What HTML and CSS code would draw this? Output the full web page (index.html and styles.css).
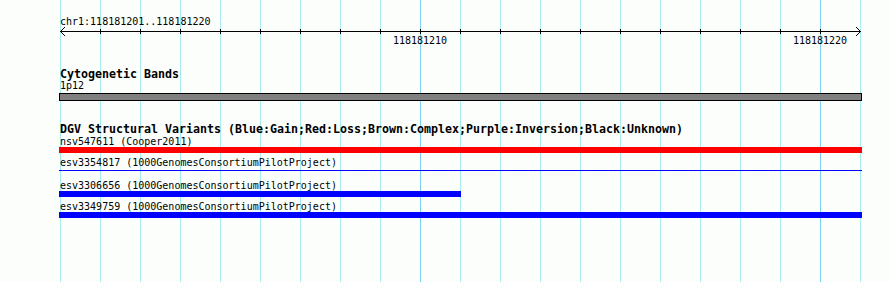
FILE: index.html
```html
<!DOCTYPE html>
<html>
<head>
<meta charset="utf-8">
<title>Genome browser</title>
<link rel="stylesheet" href="styles.css">
</head>
<body>
<div class="browser">
  <div class="grid" aria-hidden="true">
    <span class="gl" style="left:60px"></span>
    <span class="gl" style="left:100px"></span>
    <span class="gl" style="left:140px"></span>
    <span class="gl" style="left:180px"></span>
    <span class="gl" style="left:220px"></span>
    <span class="gl" style="left:260px"></span>
    <span class="gl" style="left:300px"></span>
    <span class="gl" style="left:340px"></span>
    <span class="gl" style="left:380px"></span>
    <span class="gl major" style="left:420px"></span>
    <span class="gl" style="left:460px"></span>
    <span class="gl" style="left:500px"></span>
    <span class="gl" style="left:540px"></span>
    <span class="gl" style="left:580px"></span>
    <span class="gl" style="left:620px"></span>
    <span class="gl" style="left:660px"></span>
    <span class="gl" style="left:700px"></span>
    <span class="gl" style="left:740px"></span>
    <span class="gl" style="left:780px"></span>
    <span class="gl major" style="left:820px"></span>
    <span class="gl" style="left:860px"></span>
  </div>
  <div class="tracks">
    <div class="ruler">
      <div class="ruler-label">chr1:118181201..118181220</div>
      <svg class="axis" width="803" height="10" viewBox="0 0 803 10">
        <line x1="1" y1="5.5" x2="801.5" y2="5.5"/>
        <polyline points="6,1 1.5,5.5 6,10"/>
        <polyline points="797,1 801.5,5.5 797,10"/>
        <g class="ticks">
          <line x1="41.5" y1="3" x2="41.5" y2="8"/>
          <line x1="81.5" y1="3" x2="81.5" y2="8"/>
          <line x1="121.5" y1="3" x2="121.5" y2="8"/>
          <line x1="161.5" y1="3" x2="161.5" y2="8"/>
          <line x1="201.5" y1="3" x2="201.5" y2="8"/>
          <line x1="241.5" y1="3" x2="241.5" y2="8"/>
          <line x1="281.5" y1="3" x2="281.5" y2="8"/>
          <line x1="321.5" y1="3" x2="321.5" y2="8"/>
          <line x1="361.5" y1="3" x2="361.5" y2="8"/>
          <line x1="401.5" y1="3" x2="401.5" y2="8"/>
          <line x1="441.5" y1="3" x2="441.5" y2="8"/>
          <line x1="481.5" y1="3" x2="481.5" y2="8"/>
          <line x1="521.5" y1="3" x2="521.5" y2="8"/>
          <line x1="561.5" y1="3" x2="561.5" y2="8"/>
          <line x1="601.5" y1="3" x2="601.5" y2="8"/>
          <line x1="641.5" y1="3" x2="641.5" y2="8"/>
          <line x1="681.5" y1="3" x2="681.5" y2="8"/>
          <line x1="721.5" y1="3" x2="721.5" y2="8"/>
          <line x1="761.5" y1="3" x2="761.5" y2="8"/>
        </g>
      </svg>
      <div class="tick-labels">
        <span class="tick-label" style="left:361px">118181210</span>
        <span class="tick-label" style="left:761px">118181220</span>
      </div>
    </div>

    <section class="track">
      <div class="track-title">Cytogenetic Bands</div>
      <div class="feat-label">1p12</div>
      <div class="band"></div>
    </section>

    <section class="track">
      <div class="track-title">DGV Structural Variants (Blue:Gain;Red:Loss;Brown:Complex;Purple:Inversion;Black:Unknown)</div>
      <div class="features">
        <div class="feature">
          <div class="feat-label">nsv547611 (Cooper2011)</div>
          <div class="bar-slot"><div class="bar loss" style="width:803px"></div></div>
        </div>
        <div class="feature">
          <div class="feat-label">esv3354817 (1000GenomesConsortiumPilotProject)</div>
          <div class="bar-slot"><div class="bar gain thin" style="width:803px"></div></div>
        </div>
        <div class="feature">
          <div class="feat-label">esv3306656 (1000GenomesConsortiumPilotProject)</div>
          <div class="bar-slot"><div class="bar gain" style="width:402px"></div></div>
        </div>
        <div class="feature">
          <div class="feat-label">esv3349759 (1000GenomesConsortiumPilotProject)</div>
          <div class="bar-slot"><div class="bar gain" style="width:803px"></div></div>
        </div>
      </div>
    </section>
  </div>
</div>
</body>
</html>
```

FILE: styles.css
```css
html, body {
  margin: 0;
  padding: 0;
  background: #fcfefc;
}

.browser {
  position: relative;
  width: 890px;
  height: 282px;
  overflow: hidden;
  font-family: "DejaVu Sans Mono", "Liberation Mono", monospace;
  color: #000;
}

.grid {
  position: absolute;
  top: 0;
  left: 0;
  right: 0;
  bottom: 0;
}

.gl {
  position: absolute;
  top: 0;
  bottom: 0;
  width: 1px;
  background: #a8ecf0;
}

.gl.major {
  background: #80d0f0;
}

.tracks {
  position: relative;
  width: 803px;
  padding: 16px 0 0 59px;
}

.ruler-label,
.feat-label {
  font-size: 10px;
  line-height: 9px;
  height: 10px;
  white-space: nowrap;
  padding-left: 1px;
}

.ruler-label {
  line-height: 11px;
}

.axis {
  display: block;
  stroke: #000;
  stroke-width: 1;
  fill: none;
  shape-rendering: crispEdges;
}

.tick-labels {
  position: relative;
  height: 10px;
  font-size: 10px;
  line-height: 9px;
}

.tick-label {
  position: absolute;
  top: 0;
  transform: translateX(-50%);
  white-space: nowrap;
}

.track-title {
  margin-top: 23px;
  font-weight: bold;
  font-size: 11.63px;
  line-height: 11px;
  height: 12px;
  white-space: nowrap;
  padding-left: 1px;
}

.band {
  margin-top: 2px;
  height: 8px;
  box-sizing: border-box;
  border: 1px solid #000;
  background: #808080;
}

.features {
  display: flex;
  flex-direction: column;
  gap: 5px;
  margin-top: 1px;
}

.bar-slot {
  height: 6px;
}

.bar {
  height: 6px;
}

.bar.loss {
  background: #ff0000;
}

.bar.gain {
  background: #0000ff;
}

.bar.thin {
  height: 1px;
  margin-top: 2px;
}
```
